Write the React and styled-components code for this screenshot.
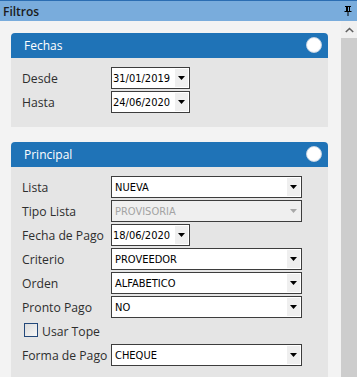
import React from "react";
import styled, { createGlobalStyle } from "styled-components";

const GlobalStyle = createGlobalStyle`
  html, body { margin: 0; padding: 0; background: #f3f3f3; overflow: hidden; }
  * { box-sizing: border-box; }
`;

const Window = styled.div`
  width: 357px;
  height: 377px;
  display: grid;
  grid-template-columns: 1fr 16px;
  grid-template-rows: 21px 1fr;
  background: #f3f3f3;
  font-family: "Open Sans", "Noto Sans", sans-serif;
  overflow: hidden;
`;

const TitleBar = styled.div`
  grid-column: 1 / 3;
  display: flex;
  align-items: center;
  justify-content: space-between;
  background: #79acdc;
  border-top: 1px solid #2b6db2;
  padding: 0 5px 0 3px;
  font-size: 12px;
  font-weight: 600;
  color: #1b1b1b;
`;

const Content = styled.div`
  padding: 12px 13px 0 11px;
  display: flex;
  flex-direction: column;
  gap: 15px;
  overflow: hidden;
`;

const ScrollBar = styled.div`
  display: flex;
  flex-direction: column;
  background: #f0f0f0;
`;

const ScrollButton = styled.div`
  height: 17px;
  display: flex;
  align-items: center;
  justify-content: center;
`;

const Thumb = styled.div`
  flex: 1;
  background: #cdcdcd;
`;

const Panel = styled.section`
  display: flex;
  flex-direction: column;
`;

const PanelHeader = styled.div`
  height: 25px;
  background: #1f73b7;
  border-radius: 4px 4px 0 0;
  display: flex;
  align-items: center;
  justify-content: space-between;
  padding: 0 6px 0 13px;
  color: #ffffff;
  font-size: 12px;
`;

const Knob = styled.span`
  width: 16px;
  height: 16px;
  border-radius: 50%;
  background: radial-gradient(circle at 45% 40%, #ffffff 60%, #e6ecf3 100%);
  border: 1px solid #c9d6e4;
  margin-top: -2px;
`;

const PanelBody = styled.div`
  background: #e5e5e5;
  padding: 9px 0 ${(p) => p.$pb || 14}px 11px;
  display: flex;
  flex-direction: column;
  gap: 2px;
`;

const Row = styled.div`
  display: grid;
  grid-template-columns: 89px auto;
  align-items: center;
  height: 22px;
`;

const Label = styled.label`
  font-size: 12.2px;
  color: #2e2e2e;
  white-space: nowrap;
`;

const Box = styled.div`
  width: ${(p) => p.$w}px;
  height: 22px;
  border: 1px solid #3d3d3d;
  background: ${(p) => (p.$disabled ? "#efefef" : "#ffffff")};
  display: flex;
  align-items: center;
  padding: 1px 1px 1px 0;
  font-family: "DejaVu Sans", "Liberation Sans", sans-serif;
  font-stretch: condensed;
  font-size: 11px;
  color: ${(p) => (p.$disabled ? "#a3a3a3" : "#000000")};
`;

const Value = styled.span`
  flex: 1;
  padding-left: ${(p) => p.$pl || 2}px;
  white-space: nowrap;
  overflow: hidden;
`;

const ArrowCell = styled.span`
  width: 13px;
  align-self: stretch;
  background: #efefef;
  display: flex;
  align-items: center;
  justify-content: center;
`;

const CheckRow = styled.div`
  display: flex;
  align-items: center;
  height: 22px;
  gap: 4px;
  padding-left: 2px;
  font-size: 12.2px;
  color: #2e2e2e;
`;

const CheckBox = styled.span`
  width: 14px;
  height: 14px;
  border: 1px solid #23487a;
  background: linear-gradient(135deg, #dcdcdc, #f7f7f7);
  margin-top: -2px;
`;

const Arrow = ({ disabled }) => (
  <ArrowCell>
    <svg width="7" height="4" viewBox="0 0 7 4">
      <path d="M0 0H7L3.5 4Z" fill={disabled ? "#a8a8a8" : "#000"} />
    </svg>
  </ArrowCell>
);

const Select = ({ value, width = 191, disabled, date }) => (
  <Box $w={width} $disabled={disabled}>
    <Value $pl={date ? 1 : 3}>{value}</Value>
    <Arrow disabled={disabled} />
  </Box>
);

const Field = ({ label, ...rest }) => (
  <Row>
    <Label>{label}</Label>
    <Select {...rest} />
  </Row>
);

const PinIcon = () => (
  <svg width="8" height="10" viewBox="0 0 8 10">
    <path d="M1 0H7V1H6V5H7.5V6H4.5V10H3.5V6H0.5V5H2V1H1Z" fill="#000" />
    <rect x="4" y="1" width="1" height="4" fill="#79acdc" />
  </svg>
);

const UpIcon = () => (
  <svg width="9" height="6" viewBox="0 0 9 6">
    <path d="M0.8 5L4.5 1.5L8.2 5" stroke="#606060" strokeWidth="1.6" fill="none" />
  </svg>
);

export default function App() {
  return (
    <>
      <GlobalStyle />
      <Window>
        <TitleBar>
          <span>Filtros</span>
          <PinIcon />
        </TitleBar>
        <Content>
          <Panel>
            <PanelHeader>
              <span>Fechas</span>
              <Knob />
            </PanelHeader>
            <PanelBody>
              <Field label="Desde" value="31/01/2019" width={79} date />
              <Field label="Hasta" value="24/06/2020" width={79} date />
            </PanelBody>
          </Panel>
          <Panel>
            <PanelHeader>
              <span>Principal</span>
              <Knob />
            </PanelHeader>
            <PanelBody $pb={20}>
              <Field label="Lista" value="NUEVA" />
              <Field label="Tipo Lista" value="PROVISORIA" disabled />
              <Field label="Fecha de Pago" value="18/06/2020" width={79} date />
              <Field label="Criterio" value="PROVEEDOR" />
              <Field label="Orden" value="ALFABETICO" />
              <Field label="Pronto Pago" value="NO" />
              <CheckRow>
                <CheckBox />
                <span>Usar Tope</span>
              </CheckRow>
              <Field label="Forma de Pago" value="CHEQUE" />
            </PanelBody>
          </Panel>
        </Content>
        <ScrollBar>
          <ScrollButton>
            <UpIcon />
          </ScrollButton>
          <Thumb />
        </ScrollBar>
      </Window>
    </>
  );
}
